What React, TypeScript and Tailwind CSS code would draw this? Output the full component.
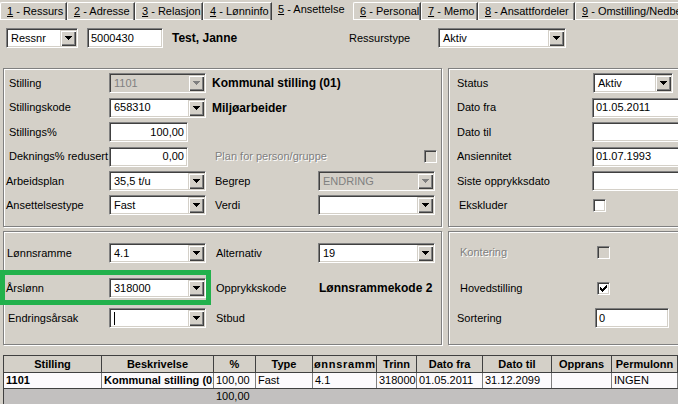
import React from "react";

const sunken =
  "border border-t-[#808080] border-l-[#808080] border-b-white border-r-white shadow-[inset_1px_1px_0_#404040,inset_-1px_-1px_0_#d4d0c8]";
const raised =
  "bg-[#d4d0c8] shadow-[inset_1px_1px_0_#d4d0c8,inset_2px_2px_0_#fff,inset_-1px_-1px_0_#404040,inset_-2px_-2px_0_#808080]";
const etched = "border border-[#808080] shadow-[inset_1px_1px_0_#fff,1px_1px_0_#fff]";
const greyText = "text-[#808080] [text-shadow:1px_1px_0_#fff]";

function Arrow({ disabled }: { disabled?: boolean }) {
  const c = disabled ? "#808080" : "#000";
  return (
    <svg width="7" height="4" shapeRendering="crispEdges">
      <rect x="0" y="0" width="7" height="1" fill={c} />
      <rect x="1" y="1" width="5" height="1" fill={c} />
      <rect x="2" y="2" width="3" height="1" fill={c} />
      <rect x="3" y="3" width="1" height="1" fill={c} />
    </svg>
  );
}

function Combo({
  className,
  value,
  disabled,
  caret,
}: {
  className: string;
  value?: string;
  disabled?: boolean;
  caret?: boolean;
}) {
  return (
    <div
      className={`${className} shrink-0 h-[20px] flex p-[1px] ${sunken} ${
        disabled ? "bg-[#d4d0c8] text-[#808080]" : "bg-white"
      }`}
    >
      <div className="flex-1 flex items-center pl-[3px] overflow-hidden whitespace-nowrap">
        {caret && <span className="w-px h-[13px] bg-black" />}
        {value}
      </div>
      <div className={`w-[16px] flex items-center justify-center ${raised}`}>
        <Arrow disabled={disabled} />
      </div>
    </div>
  );
}

function TextBox({ className, value, right }: { className: string; value?: string; right?: boolean }) {
  return (
    <div
      className={`${className} shrink-0 h-[20px] flex items-center bg-white px-[3px] whitespace-nowrap overflow-hidden ${sunken} ${
        right ? "justify-end" : ""
      }`}
    >
      {value}
    </div>
  );
}

function Check({ checked, disabled, className }: { checked?: boolean; disabled?: boolean; className?: string }) {
  return (
    <div
      className={`${className ?? ""} shrink-0 w-[13px] h-[13px] flex items-center justify-center ${sunken} ${
        disabled ? "bg-[#d4d0c8]" : "bg-white"
      }`}
    >
      {checked && (
        <svg width="7" height="7" shapeRendering="crispEdges">
          <rect x="0" y="2" width="1" height="3" fill="#000" />
          <rect x="1" y="3" width="1" height="3" fill="#000" />
          <rect x="2" y="4" width="1" height="3" fill="#000" />
          <rect x="3" y="3" width="1" height="3" fill="#000" />
          <rect x="4" y="2" width="1" height="3" fill="#000" />
          <rect x="5" y="1" width="1" height="3" fill="#000" />
          <rect x="6" y="0" width="1" height="3" fill="#000" />
        </svg>
      )}
    </div>
  );
}

const tabs = [
  { k: "1", t: " - Ressurs", w: "w-[67px]" },
  { k: "2", t: " - Adresse", w: "w-[68px]" },
  { k: "3", t: " - Relasjon", w: "w-[68px]" },
  { k: "4", t: " - Lønninfo", w: "w-[69px]" },
  { k: "5", t: " - Ansettelse", w: "w-[81px]", active: true },
  { k: "6", t: " - Personal", w: "w-[68px]" },
  { k: "7", t: " - Memo", w: "w-[57px]" },
  { k: "8", t: " - Ansattfordeler", w: "w-[97px]" },
  { k: "9", t: " - Omstilling/Nedbemanning", w: "w-[160px]" },
];

const cols = [
  { h: "Stilling", w: "w-[98px]", d: "1101", b: true },
  { h: "Beskrivelse", w: "w-[112px]", d: "Kommunal stilling (01)", b: true, sum: "" },
  { h: "%", w: "w-[42px]", d: "100,00", sum: "100,00" },
  { h: "Type", w: "w-[57px]", d: "Fast" },
  { h: "Lønnsramme", w: "w-[64px]", d: "4.1", wide: true },
  { h: "Trinn", w: "w-[40px]", d: "318000" },
  { h: "Dato fra", w: "w-[66px]", d: "01.05.2011" },
  { h: "Dato til", w: "w-[69px]", d: "31.12.2099" },
  { h: "Opprans", w: "w-[60px]", d: "" },
  { h: "Permulonn", w: "w-[66px]", d: "INGEN" },
];

export default function App() {
  return (
    <div className="w-[678px] h-[404px] overflow-hidden bg-[#d4d0c8] text-black text-[11px] leading-none font-['Liberation_Sans',Arial,sans-serif]">
      {/* tabs */}
      <div className="flex items-end h-[20px] shadow-[inset_0_-1px_0_#fff]">
        {tabs.map((t) => (
          <div
            key={t.k}
            className={`${t.w} shrink-0 flex items-center pl-[6px] whitespace-nowrap overflow-hidden ${
              t.active
                ? "h-[20px] bg-[#d4d0c8] pb-[1px]"
                : "h-[18px] border-t border-l border-white border-r border-r-[#404040] shadow-[inset_-1px_0_0_#808080] rounded-tl-[2px]"
            }`}
          >
            <span className="underline underline-offset-[1px]">{t.k}</span>
            <span className="whitespace-pre">{t.t}</span>
          </div>
        ))}
      </div>

      {/* header row */}
      <div className="flex items-center h-[20px] mt-[8px]">
        <Combo className="ml-[6px] w-[72px]" value="Ressnr" />
        <TextBox className="ml-[9px] w-[76px]" value="5000430" />
        <div className="ml-[9px] w-[177px] shrink-0 font-bold text-[12px]">Test, Janne</div>
        <div className="w-[89px] shrink-0">Ressurstype</div>
        <Combo className="w-[128px]" value="Aktiv" />
      </div>

      {/* upper panels */}
      <div className="flex mt-[20px]">
        <div className={`ml-[3px] w-[439px] h-[159px] shrink-0 pt-[2px] ${etched}`}>
          <div className="flex items-center h-[24px]">
            <div className="w-[105px] shrink-0 pl-[5px]">Stilling</div>
            <Combo className="w-[97px]" value="1101" disabled />
            <div className="pl-[6px] font-bold text-[12px] whitespace-nowrap">Kommunal stilling (01)</div>
          </div>
          <div className="flex items-center h-[25px]">
            <div className="w-[105px] shrink-0 pl-[5px]">Stillingskode</div>
            <Combo className="w-[97px]" value="658310" />
            <div className="pl-[6px] font-bold text-[12px] whitespace-nowrap">Miljøarbeider</div>
          </div>
          <div className="flex items-center h-[24px]">
            <div className="w-[105px] shrink-0 pl-[5px]">Stillings%</div>
            <TextBox className="w-[79px]" value="100,00" right />
          </div>
          <div className="flex items-center h-[25px]">
            <div className="w-[105px] shrink-0 pl-[5px] whitespace-nowrap">Deknings% redusert</div>
            <TextBox className="w-[79px]" value="0,00" right />
            <div className={`ml-[18px] w-[112px] shrink-0 pl-[9px] whitespace-nowrap ${greyText}`}>
              Plan for person/gruppe
            </div>
            <Check className="ml-[106px]" disabled />
          </div>
          <div className="flex items-center h-[24px]">
            <div className="w-[105px] shrink-0 pl-[2px]">Arbeidsplan</div>
            <Combo className="w-[97px]" value="35,5 t/u" />
            <div className="w-[112px] shrink-0 pl-[9px]">Begrep</div>
            <Combo className="w-[117px]" value="ENDRING" disabled />
          </div>
          <div className="flex items-center h-[24px]">
            <div className="w-[105px] shrink-0 pl-[2px]">Ansettelsestype</div>
            <Combo className="w-[97px]" value="Fast" />
            <div className="w-[112px] shrink-0 pl-[9px]">Verdi</div>
            <Combo className="w-[117px]" value="" />
          </div>
        </div>

        <div className={`ml-[6px] w-[240px] h-[159px] shrink-0 pt-[2px] ${etched}`}>
          <div className="flex items-center h-[24px]">
            <div className="w-[144px] shrink-0 pl-[8px]">Status</div>
            <Combo className="w-[80px]" value="Aktiv" />
          </div>
          <div className="flex items-center h-[25px]">
            <div className="w-[143px] shrink-0 pl-[8px]">Dato fra</div>
            <TextBox className="w-[100px]" value="01.05.2011" />
          </div>
          <div className="flex items-center h-[24px]">
            <div className="w-[143px] shrink-0 pl-[8px]">Dato til</div>
            <TextBox className="w-[100px]" />
          </div>
          <div className="flex items-center h-[25px]">
            <div className="w-[143px] shrink-0 pl-[8px]">Ansiennitet</div>
            <TextBox className="w-[100px]" value="01.07.1993" />
          </div>
          <div className="flex items-center h-[24px]">
            <div className="w-[143px] shrink-0 pl-[8px]">Siste opprykksdato</div>
            <TextBox className="w-[100px]" />
          </div>
          <div className="flex items-center h-[24px]">
            <div className="w-[144px] shrink-0 pl-[10px]">Ekskluder</div>
            <Check />
          </div>
        </div>
      </div>

      {/* lower panels */}
      <div className="flex mt-[4px]">
        <div className={`ml-[3px] w-[439px] h-[114px] shrink-0 pt-[9px] ${etched}`}>
          <div className="flex items-center h-[24px]">
            <div className="w-[105px] shrink-0 pl-[3px]">Lønnsramme</div>
            <Combo className="w-[97px]" value="4.1" />
            <div className="w-[112px] shrink-0 pl-[10px]">Alternativ</div>
            <Combo className="w-[117px]" value="19" />
          </div>
          <div className="relative flex items-center h-[24px] mt-[11px]">
            <div className="absolute left-[-4px] top-[-6px] w-[211px] h-[35px] border-[5px] border-[#22b14c] z-10" />
            <div className="w-[105px] shrink-0 pl-[2px]">Årslønn</div>
            <Combo className="w-[97px]" value="318000" />
            <div className="w-[112px] shrink-0 pl-[10px]">Opprykkskode</div>
            <div className="pl-[1px] font-bold text-[12px] whitespace-nowrap">Lønnsrammekode 2</div>
          </div>
          <div className="flex items-center h-[24px] mt-[6px]">
            <div className="w-[105px] shrink-0 pl-[4px]">Endringsårsak</div>
            <Combo className="w-[97px]" caret />
            <div className="w-[112px] shrink-0 pl-[10px]">Stbud</div>
          </div>
        </div>

        <div className={`ml-[6px] w-[240px] h-[114px] shrink-0 pt-[9px] ${etched}`}>
          <div className="flex items-center h-[20px] mt-[1px]">
            <div className={`w-[148px] shrink-0 pl-[11px] ${greyText}`}>Kontering</div>
            <Check disabled />
          </div>
          <div className="flex items-center h-[24px] mt-[14px]">
            <div className="w-[148px] shrink-0 pl-[11px]">Hovedstilling</div>
            <Check checked />
          </div>
          <div className="flex items-center h-[24px] mt-[6px]">
            <div className="w-[146px] shrink-0 pl-[8px]">Sortering</div>
            <TextBox className="w-[74px]" value="0" />
          </div>
        </div>
      </div>

      {/* grid */}
      <div className="ml-[3px] mt-[10px] w-[700px] border-l border-t border-[#404040]">
        <div className="flex h-[17px] border-b border-[#404040] bg-[#d4d0c8]">
          {cols.map((c) => (
            <div
              key={c.h}
              className={`${c.w} shrink-0 flex items-center justify-center overflow-hidden whitespace-nowrap font-bold border-r border-[#404040] ${
                c.wide ? "tracking-[0.7px]" : ""
              }`}
            >
              {c.h}
            </div>
          ))}
        </div>
        <div className="flex h-[16px] border-b border-[#404040] bg-[#fcfafc]">
          {cols.map((c) => (
            <div
              key={c.h}
              className={`${c.w} shrink-0 flex items-center pl-[2px] overflow-hidden whitespace-nowrap border-r border-[#808080] ${
                c.b ? "font-bold" : ""
              }`}
            >
              {c.d}
            </div>
          ))}
        </div>
        <div className="flex h-[16px] border-b border-[#404040] bg-[#c2c0bf]">
          {cols.map((c) => (
            <div key={c.h} className={`${c.w} shrink-0 flex items-center pl-[2px] whitespace-nowrap`}>
              {c.sum ?? ""}
            </div>
          ))}
        </div>
      </div>
    </div>
  );
}
